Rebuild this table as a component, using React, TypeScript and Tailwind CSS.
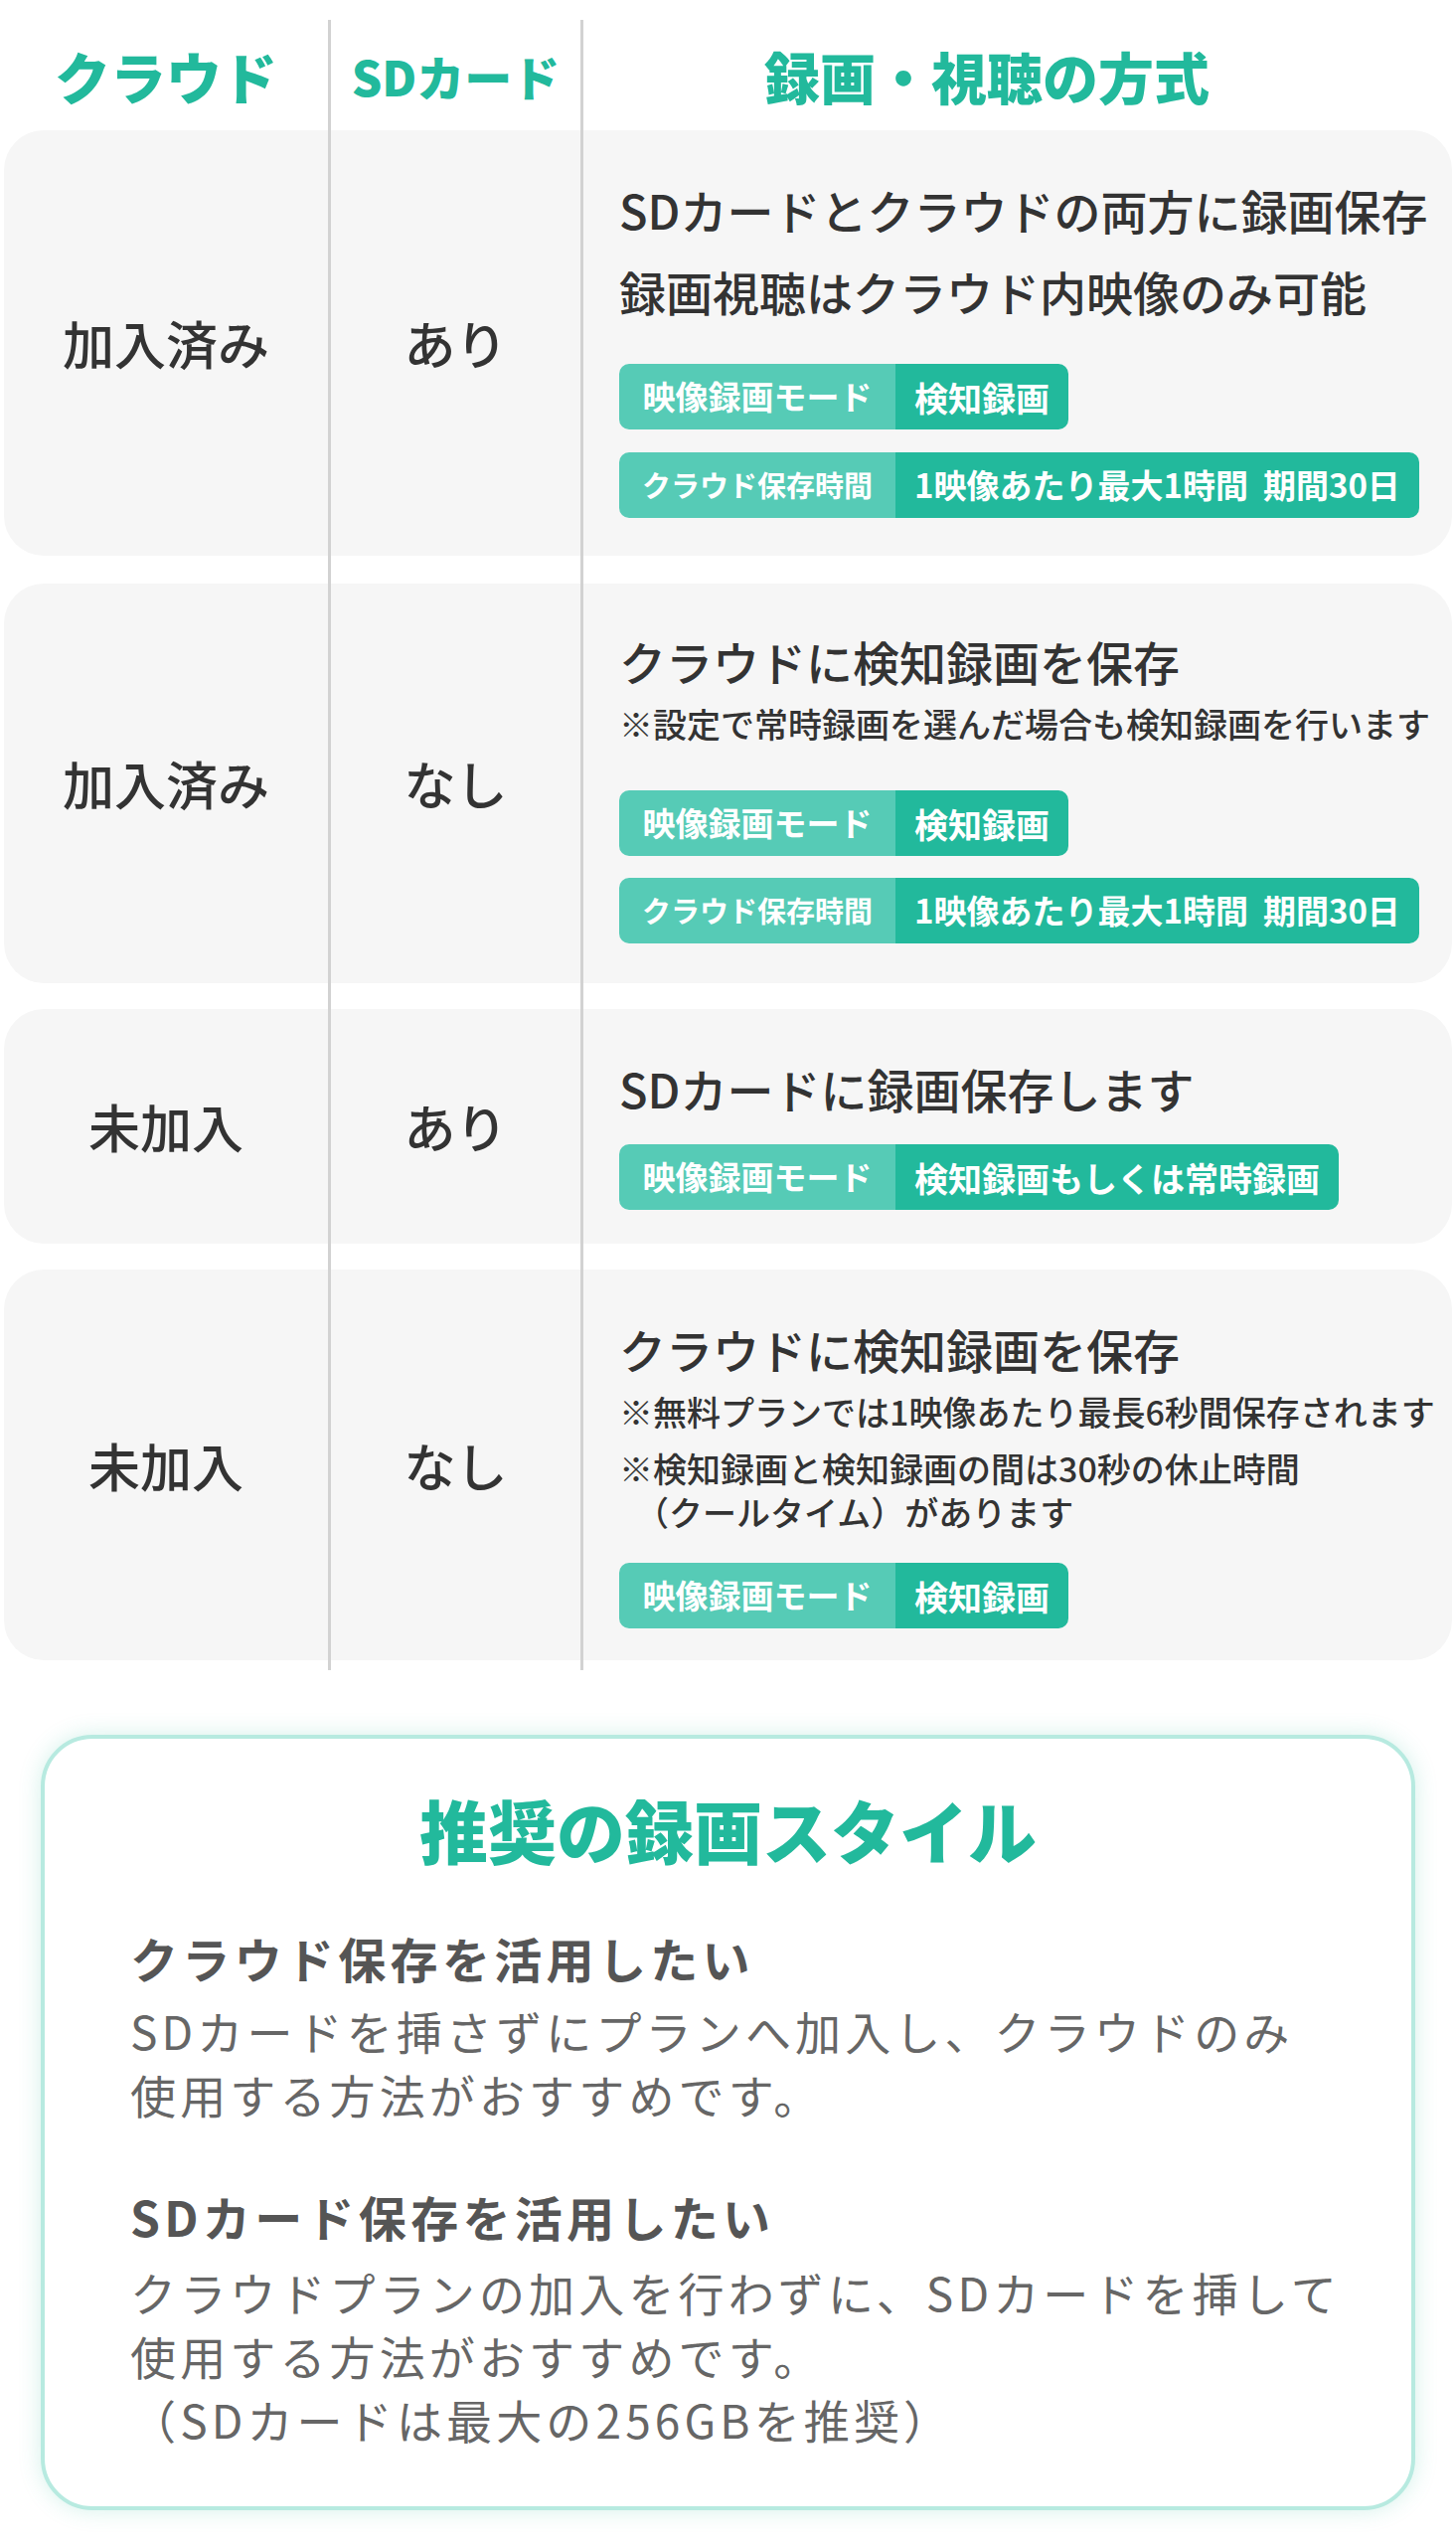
import type { ReactNode } from 'react';

const cell = 'bg-[#f6f6f6] text-[#333333]';
const line = 'border-l-[3px] border-[#d2d2d2]';

function Pill({ label, value, small }: { label: string; value: ReactNode; small?: boolean }) {
  return (
    <div className="flex h-[66px] w-fit overflow-hidden rounded-[10px] font-bold text-white">
      <div className={`flex w-[278px] items-center justify-center bg-[#56cbb6] ${small ? 'text-[29px]' : 'text-[33px]'}`}>
        {label}
      </div>
      <div className={`flex items-center whitespace-nowrap bg-[#22b99c] px-[19px] ${small ? 'text-[33px]' : 'text-[34px]'}`}>{value}</div>
    </div>
  );
}

function Row({ plan, sd, children, pad }: { plan: string; sd: string; children: ReactNode; pad: string }) {
  return (
    <>
      <div className={`${cell} flex items-center justify-center rounded-l-[40px] text-[52px] font-medium`}>{plan}</div>
      <div className={`${cell} ${line} flex items-center justify-center text-[52px] font-medium`}>{sd}</div>
      <div className={`${cell} ${line} flex flex-col rounded-r-[40px] pl-[36px] ${pad}`}>{children}</div>
    </>
  );
}

function Spacer({ h }: { h: string }) {
  return (
    <>
      <div className={h} />
      <div className={`${h} ${line}`} />
      <div className={`${h} ${line}`} />
    </>
  );
}

export default function App() {
  return (
    <main className="w-[1465px] bg-white pt-[20px] pb-[40px] font-['Noto_Sans_CJK_JP',sans-serif]">
      {/* comparison table */}
      <div className="grid grid-cols-[326px_254px_1fr] px-[4px]">
        <div className="flex h-[111px] items-center justify-center text-[56px] font-black text-[#22b99c]">クラウド</div>
        <div className={`${line} flex h-[111px] items-center justify-center text-[48px] font-black text-[#22b99c]`}>SDカード</div>
        <div className={`${line} flex h-[111px] items-center justify-center pr-[62px] text-[56px] font-black text-[#22b99c]`}>
          録画・視聴の方式
        </div>

        <Row plan="加入済み" sd="あり" pad="pt-[39px] pb-[38px]">
          <p className="whitespace-nowrap text-[47px] font-medium leading-[82px]">SDカードとクラウドの両方に録画保存</p>
          <p className="whitespace-nowrap text-[47px] font-medium leading-[82px]">録画視聴はクラウド内映像のみ可能</p>
          <div className="mt-[32px] flex flex-col gap-[23px]">
            <Pill label="映像録画モード" value="検知録画" />
            <Pill label="クラウド保存時間" value={'1映像あたり最大1時間\u00a0\u00a0期間30日'} small />
          </div>
        </Row>

        <Spacer h="h-[28px]" />

        <Row plan="加入済み" sd="なし" pad="pt-[37px] pb-[40px]">
          <p className="whitespace-nowrap text-[47px] font-medium leading-[82px]">クラウドに検知録画を保存</p>
          <p className="whitespace-nowrap text-[34px] font-medium leading-[44px]">※設定で常時録画を選んだ場合も検知録画を行います</p>
          <div className="mt-[45px] flex flex-col gap-[22px]">
            <Pill label="映像録画モード" value="検知録画" />
            <Pill label="クラウド保存時間" value={'1映像あたり最大1時間\u00a0\u00a0期間30日'} small />
          </div>
        </Row>

        <Spacer h="h-[26px]" />

        <Row plan="未加入" sd="あり" pad="pt-[39px] pb-[34px]">
          <p className="whitespace-nowrap text-[47px] font-medium leading-[82px]">SDカードに録画保存します</p>
          <div className="mt-[15px]">
            <Pill label="映像録画モード" value="検知録画もしくは常時録画" />
          </div>
        </Row>

        <Spacer h="h-[26px]" />

        <Row plan="未加入" sd="なし" pad="pt-[39px] pb-[32px]">
          <p className="whitespace-nowrap text-[47px] font-medium leading-[82px]">クラウドに検知録画を保存</p>
          <p className="whitespace-nowrap text-[34px] font-medium leading-[44px]">※無料プランでは1映像あたり最長6秒間保存されます</p>
          <p className="mt-[13px] whitespace-nowrap text-[34px] font-medium leading-[44px]">
            ※検知録画と検知録画の間は30秒の休止時間
            <br />
            <span className="pl-[16px]">（クールタイム）があります</span>
          </p>
          <div className="mt-[29px]">
            <Pill label="映像録画モード" value="検知録画" />
          </div>
        </Row>

        <Spacer h="h-[10px]" />
      </div>

      {/* recommended style */}
      <section className="mx-[41px] mt-[65px] rounded-[52px] border-[4px] border-[#b7eae0] bg-white pt-[44px] pb-[56px] pl-[86px] shadow-[0_0_22px_rgba(60,190,160,0.22)]">
        <h2 className="pr-[86px] text-center text-[69px] font-black leading-[95px] text-[#22b99c]">推奨の録画スタイル</h2>

        <h3 className="mt-[45px] text-[48px] font-bold leading-[72px] tracking-[0.09em] text-[#555555]">クラウド保存を活用したい</h3>
        <p className="mt-[5px] whitespace-nowrap text-[46px] leading-[64px] tracking-[0.09em] text-[#666666]">
          SDカードを挿さずにプランへ加入し、クラウドのみ
          <br />
          使用する方法がおすすめです。
        </p>

        <h3 className="mt-[55px] text-[48px] font-bold leading-[72px] tracking-[0.09em] text-[#555555]">SDカード保存を活用したい</h3>
        <p className="mt-[8px] whitespace-nowrap text-[46px] leading-[64px] tracking-[0.09em] text-[#666666]">
          クラウドプランの加入を行わずに、SDカードを挿して
          <br />
          使用する方法がおすすめです。
          <br />
          （SDカードは最大の256GBを推奨）
        </p>
      </section>
    </main>
  );
}
